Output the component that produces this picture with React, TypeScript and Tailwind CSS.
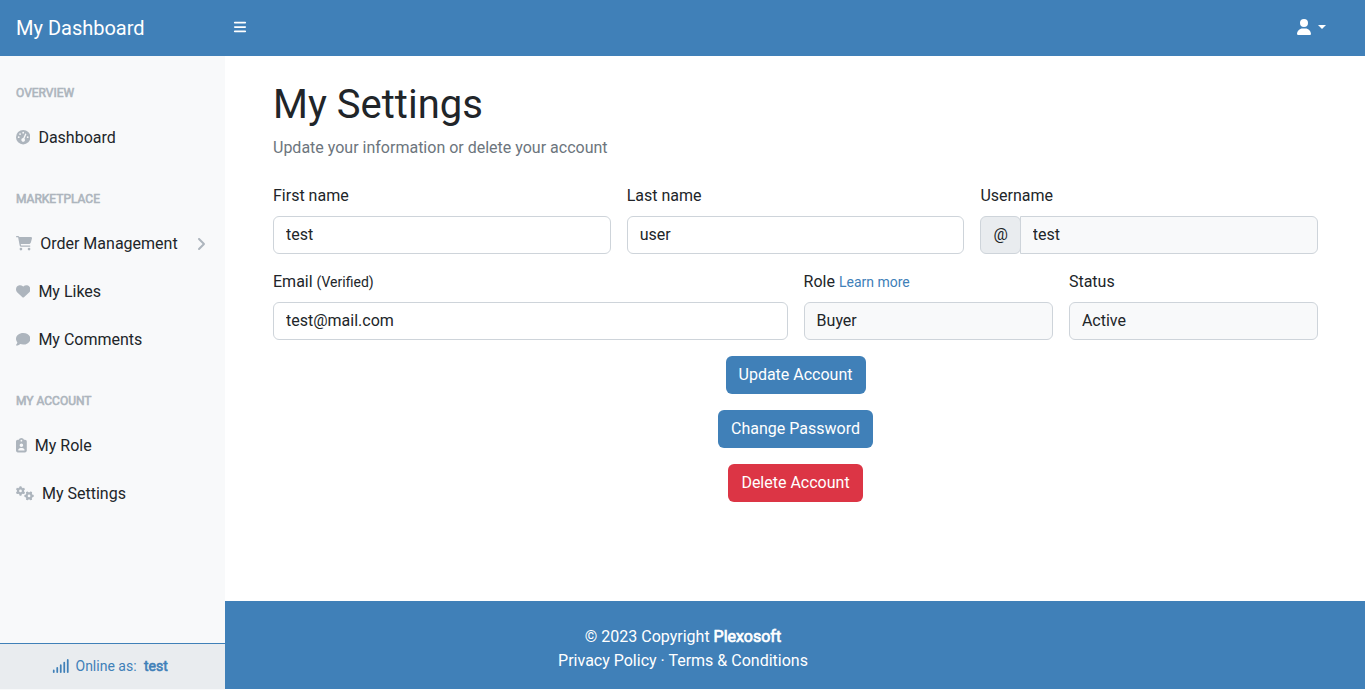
import type { ReactNode } from "react";
import {
  FaAngleRight,
  FaBars,
  FaCartShopping,
  FaClipboardUser,
  FaComment,
  FaGaugeHigh,
  FaGears,
  FaHeart,
  FaSignal,
  FaUser,
} from "react-icons/fa6";

function SectionTitle({ children }: { children: ReactNode }) {
  return (
    <div className="px-4 pt-7 pb-3 text-xs leading-[18px] uppercase text-[#adb5bd] [-webkit-text-stroke:0.6px_#adb5bd]">
      {children}
    </div>
  );
}

function NavItem({ icon, label, arrow = false }: { icon: ReactNode; label: string; arrow?: boolean }) {
  return (
    <a href="#" className="flex h-12 items-center px-4 leading-6 text-[#212529]">
      <span className="mr-2 flex shrink-0 pb-px text-[14.4px] text-[#adb5bd]">{icon}</span>
      {label}
      {arrow && (
        <span className="ml-auto flex text-base text-[#adb5bd]">
          <FaAngleRight />
        </span>
      )}
    </a>
  );
}

function Field({ label, value, readOnly = false, prefix, className = "" }: {
  label: ReactNode;
  value: string;
  readOnly?: boolean;
  prefix?: string;
  className?: string;
}) {
  return (
    <div className={className}>
      <label className="mb-2 block leading-6">{label}</label>
      <div className="flex">
        {prefix && (
          <span className="flex h-[38px] items-center rounded-md border border-[#ced4da] bg-[#e9ecef] px-3 leading-6">
            {prefix}
          </span>
        )}
        <input
          defaultValue={value}
          readOnly={readOnly}
          className={`h-[38px] w-full min-w-0 border border-[#ced4da] px-3 pt-[5px] pb-[7px] leading-6 outline-none ${
            prefix ? "-ml-px rounded-r-md" : "rounded-md"
          } ${readOnly ? "bg-[#f8f9fa]" : "bg-white"}`}
        />
      </div>
    </div>
  );
}

function Button({ children, danger = false }: { children: ReactNode; danger?: boolean }) {
  return (
    <button
      type="button"
      className={`h-[38px] rounded-md px-[13px] leading-6 text-white ${danger ? "bg-[#dc3545]" : "bg-[#4080b8]"}`}
    >
      {children}
    </button>
  );
}

export default function App() {
  return (
    <div className="flex h-[690px] flex-col bg-white font-[Roboto,sans-serif] text-base text-[#212529]">
      <header className="flex h-14 shrink-0 items-center bg-[#4080b8] text-white">
        <a href="#" className="w-[225px] pl-4 text-xl leading-[30px]">My Dashboard</a>
        <button type="button" className="px-2 pb-0.5 text-sm" aria-label="Toggle sidebar">
          <FaBars />
        </button>
        <button type="button" className="mr-[39px] ml-auto flex items-center gap-[5.4px]" aria-label="Account menu">
          <FaUser className="mr-px mb-0.5" />
          <span className="mb-0.5 border-x-[4.8px] border-t-[4.8px] border-x-transparent border-t-white" />
        </button>
      </header>
      <div className="flex min-h-0 flex-1">
        <aside className="flex w-[225px] shrink-0 flex-col bg-[#f8f9fa]">
          <nav className="flex-1">
            <SectionTitle>Overview</SectionTitle>
            <NavItem icon={<FaGaugeHigh />} label="Dashboard" />
            <SectionTitle>Marketplace</SectionTitle>
            <NavItem icon={<FaCartShopping className="w-[1.125em]" />} label="Order Management" arrow />
            <NavItem icon={<FaHeart />} label="My Likes" />
            <NavItem icon={<FaComment />} label="My Comments" />
            <SectionTitle>My Account</SectionTitle>
            <NavItem icon={<FaClipboardUser className="w-[0.75em]" />} label="My Role" />
            <NavItem icon={<FaGears className="w-[1.25em]" />} label="My Settings" />
          </nav>
          <div className="mb-px flex h-[46px] items-center border-t border-[#4080b8] bg-[#e9ecef] pb-0.5 pl-[52px] text-sm text-[#4080b8]">
            <FaSignal className="w-[1.25em]" />
            <span className="ml-1.5">Online as:</span>
            <span className="ml-[7.5px] [-webkit-text-stroke:0.6px_#4080b8]">test</span>
          </div>
        </aside>
        <div className="flex flex-1 flex-col">
          <main className="flex-1 pt-[25px] pr-[46.8px] pl-12">
            <h1 className="mb-[7px] text-[40px] leading-[48px]">My Settings</h1>
            <p className="mb-6 leading-6 text-[#6c757d]">Update your information or delete your account</p>
            <form>
              <div className="grid grid-cols-12 gap-4">
                <Field className="col-span-4" label="First name" value="test" />
                <Field className="col-span-4" label="Last name" value="user" />
                <Field className="col-span-4" label="Username" value="test" prefix="@" readOnly />
                <Field
                  className="col-span-6"
                  label={<>Email <small className="text-sm leading-none">(Verified)</small></>}
                  value="test@mail.com"
                />
                <Field
                  className="col-span-3"
                  label={<>Role <a href="#" className="text-sm leading-none text-[#4080b8]">Learn more</a></>}
                  value="Buyer"
                  readOnly
                />
                <Field className="col-span-3" label="Status" value="Active" readOnly />
              </div>
              <div className="mt-4 flex flex-col items-center gap-4 pr-[0.2px]">
                <Button>Update Account</Button>
                <Button>Change Password</Button>
                <Button danger>Delete Account</Button>
              </div>
            </form>
          </main>
          <footer className="mb-px h-[88px] bg-[#4080b8] pt-6 pr-56 text-center leading-6 text-white">
            <div>
              © 2023 Copyright <span className="[-webkit-text-stroke:0.7px_white]">Plexosoft</span>
            </div>
            <div>
              <a href="#">Privacy Policy</a> · <a href="#">Terms &amp; Conditions</a>
            </div>
          </footer>
        </div>
      </div>
    </div>
  );
}
